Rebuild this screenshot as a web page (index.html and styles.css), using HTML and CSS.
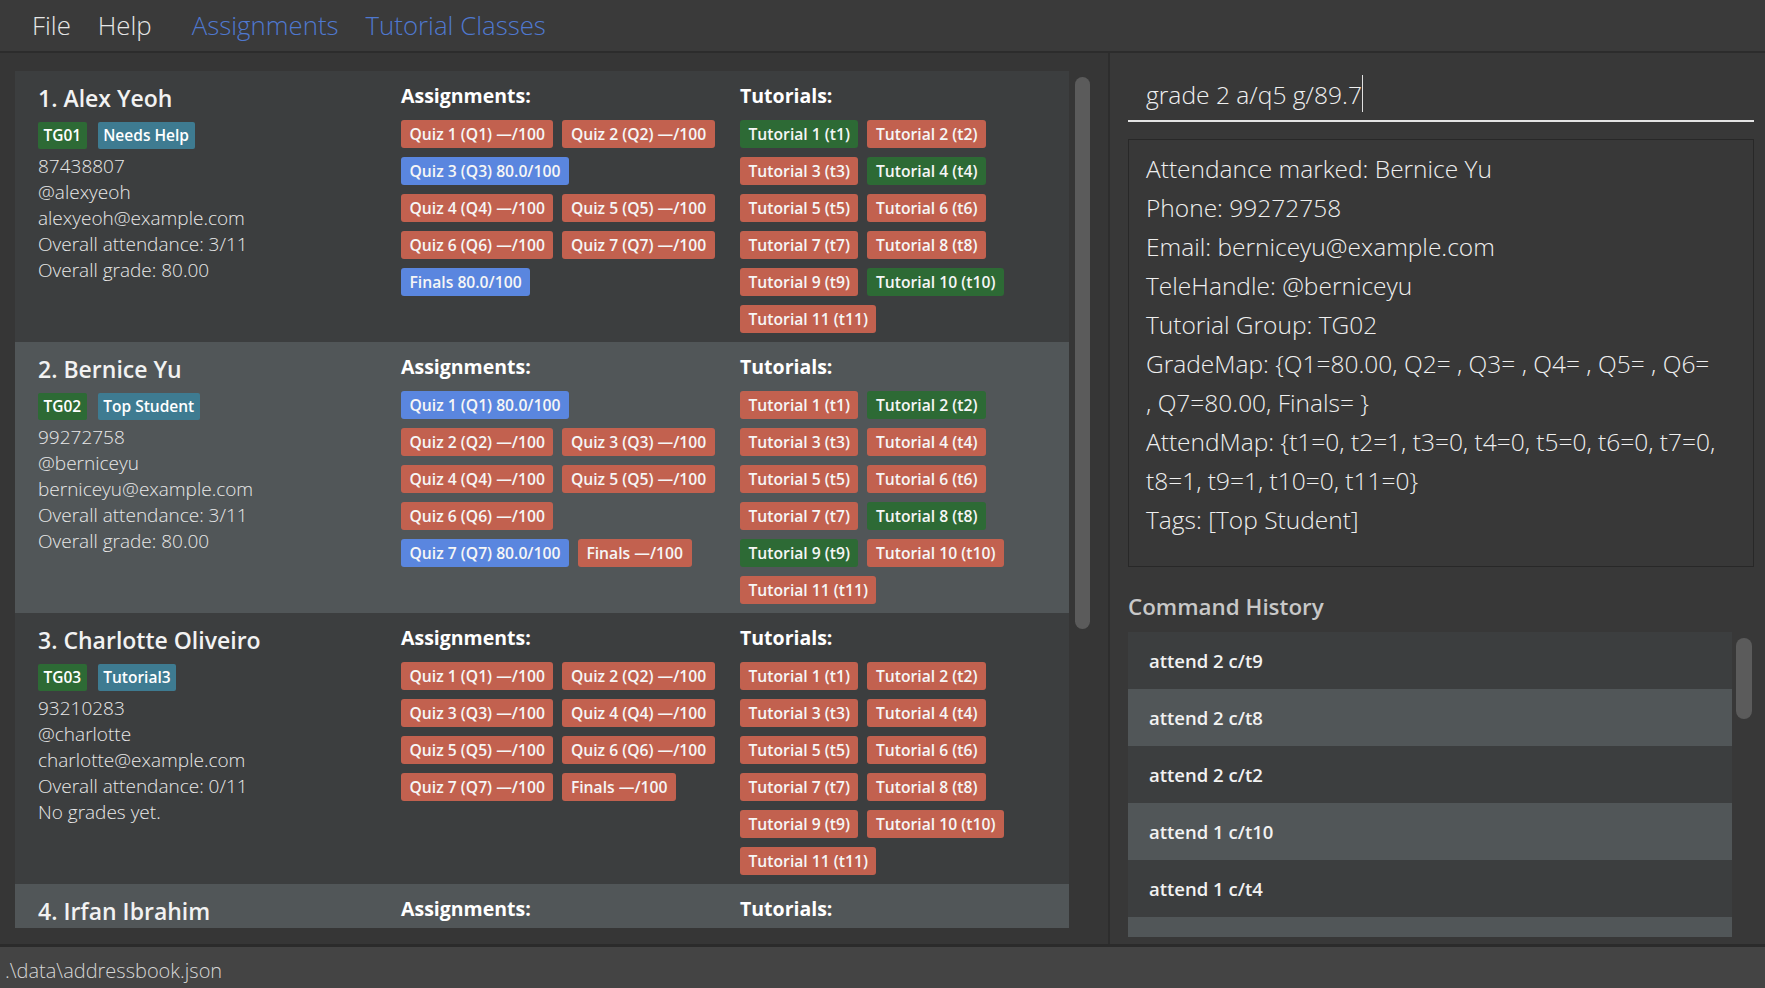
FILE: index.html
```html
<!DOCTYPE html>
<html lang="en">
<head>
<meta charset="utf-8">
<title>Address Book</title>
<link rel="stylesheet" href="styles.css">
</head>
<body>
<div class="app">
  <nav class="menubar">
    <span class="menu-item">File</span>
    <span class="menu-item">Help</span>
    <span class="menu-item menu-link first-link">Assignments</span>
    <span class="menu-item menu-link">Tutorial Classes</span>
  </nav>

  <div class="main">
    <section class="left-pane">
      <div class="person-list">
        <article class="card">
          <div class="info">
            <div class="name">1. Alex Yeoh</div>
            <div class="tags"><span class="tag tag-group">TG01</span><span class="tag">Needs Help</span></div>
            <div class="detail">87438807</div>
            <div class="detail">@alexyeoh</div>
            <div class="detail">alexyeoh@example.com</div>
            <div class="detail">Overall attendance: 3/11</div>
            <div class="detail">Overall grade: 80.00</div>
          </div>
          <div class="col">
            <div class="col-title">Assignments:</div>
            <div class="chips chips-assign">
              <span class="chip red">Quiz 1 (Q1) —/100</span>
              <span class="chip red">Quiz 2 (Q2) —/100</span>
              <span class="chip blue">Quiz 3 (Q3) 80.0/100</span>
              <span class="chip red">Quiz 4 (Q4) —/100</span>
              <span class="chip red">Quiz 5 (Q5) —/100</span>
              <span class="chip red">Quiz 6 (Q6) —/100</span>
              <span class="chip red">Quiz 7 (Q7) —/100</span>
              <span class="chip blue">Finals 80.0/100</span>
            </div>
          </div>
          <div class="col">
            <div class="col-title">Tutorials:</div>
            <div class="chips chips-tut">
              <span class="chip green">Tutorial 1 (t1)</span>
              <span class="chip red">Tutorial 2 (t2)</span>
              <span class="chip red">Tutorial 3 (t3)</span>
              <span class="chip green">Tutorial 4 (t4)</span>
              <span class="chip red">Tutorial 5 (t5)</span>
              <span class="chip red">Tutorial 6 (t6)</span>
              <span class="chip red">Tutorial 7 (t7)</span>
              <span class="chip red">Tutorial 8 (t8)</span>
              <span class="chip red">Tutorial 9 (t9)</span>
              <span class="chip green">Tutorial 10 (t10)</span>
              <span class="chip red">Tutorial 11 (t11)</span>
            </div>
          </div>
        </article>

        <article class="card alt">
          <div class="info">
            <div class="name">2. Bernice Yu</div>
            <div class="tags"><span class="tag tag-group">TG02</span><span class="tag">Top Student</span></div>
            <div class="detail">99272758</div>
            <div class="detail">@berniceyu</div>
            <div class="detail">berniceyu@example.com</div>
            <div class="detail">Overall attendance: 3/11</div>
            <div class="detail">Overall grade: 80.00</div>
          </div>
          <div class="col">
            <div class="col-title">Assignments:</div>
            <div class="chips chips-assign">
              <span class="chip blue">Quiz 1 (Q1) 80.0/100</span>
              <span class="chip red">Quiz 2 (Q2) —/100</span>
              <span class="chip red">Quiz 3 (Q3) —/100</span>
              <span class="chip red">Quiz 4 (Q4) —/100</span>
              <span class="chip red">Quiz 5 (Q5) —/100</span>
              <span class="chip red">Quiz 6 (Q6) —/100</span>
              <span class="chip blue">Quiz 7 (Q7) 80.0/100</span>
              <span class="chip red">Finals —/100</span>
            </div>
          </div>
          <div class="col">
            <div class="col-title">Tutorials:</div>
            <div class="chips chips-tut">
              <span class="chip red">Tutorial 1 (t1)</span>
              <span class="chip green">Tutorial 2 (t2)</span>
              <span class="chip red">Tutorial 3 (t3)</span>
              <span class="chip red">Tutorial 4 (t4)</span>
              <span class="chip red">Tutorial 5 (t5)</span>
              <span class="chip red">Tutorial 6 (t6)</span>
              <span class="chip red">Tutorial 7 (t7)</span>
              <span class="chip green">Tutorial 8 (t8)</span>
              <span class="chip green">Tutorial 9 (t9)</span>
              <span class="chip red">Tutorial 10 (t10)</span>
              <span class="chip red">Tutorial 11 (t11)</span>
            </div>
          </div>
        </article>

        <article class="card">
          <div class="info">
            <div class="name">3. Charlotte Oliveiro</div>
            <div class="tags"><span class="tag tag-group">TG03</span><span class="tag">Tutorial3</span></div>
            <div class="detail">93210283</div>
            <div class="detail">@charlotte</div>
            <div class="detail">charlotte@example.com</div>
            <div class="detail">Overall attendance: 0/11</div>
            <div class="detail">No grades yet.</div>
          </div>
          <div class="col">
            <div class="col-title">Assignments:</div>
            <div class="chips chips-assign">
              <span class="chip red">Quiz 1 (Q1) —/100</span>
              <span class="chip red">Quiz 2 (Q2) —/100</span>
              <span class="chip red">Quiz 3 (Q3) —/100</span>
              <span class="chip red">Quiz 4 (Q4) —/100</span>
              <span class="chip red">Quiz 5 (Q5) —/100</span>
              <span class="chip red">Quiz 6 (Q6) —/100</span>
              <span class="chip red">Quiz 7 (Q7) —/100</span>
              <span class="chip red">Finals —/100</span>
            </div>
          </div>
          <div class="col">
            <div class="col-title">Tutorials:</div>
            <div class="chips chips-tut">
              <span class="chip red">Tutorial 1 (t1)</span>
              <span class="chip red">Tutorial 2 (t2)</span>
              <span class="chip red">Tutorial 3 (t3)</span>
              <span class="chip red">Tutorial 4 (t4)</span>
              <span class="chip red">Tutorial 5 (t5)</span>
              <span class="chip red">Tutorial 6 (t6)</span>
              <span class="chip red">Tutorial 7 (t7)</span>
              <span class="chip red">Tutorial 8 (t8)</span>
              <span class="chip red">Tutorial 9 (t9)</span>
              <span class="chip red">Tutorial 10 (t10)</span>
              <span class="chip red">Tutorial 11 (t11)</span>
            </div>
          </div>
        </article>

        <article class="card alt">
          <div class="info">
            <div class="name">4. Irfan Ibrahim</div>
          </div>
          <div class="col">
            <div class="col-title">Assignments:</div>
          </div>
          <div class="col">
            <div class="col-title">Tutorials:</div>
          </div>
        </article>
      </div>
      <div class="scroll-track list-track"><div class="scroll-thumb list-thumb"></div></div>
    </section>

    <section class="right-pane">
      <div class="command-box"><span class="command-text">grade 2 a/q5 g/89.7</span><span class="caret"></span></div>
      <div class="result-box">
        <div class="result-line">Attendance marked: Bernice Yu</div>
        <div class="result-line">Phone: 99272758</div>
        <div class="result-line">Email: berniceyu@example.com</div>
        <div class="result-line">TeleHandle: @berniceyu</div>
        <div class="result-line">Tutorial Group: TG02</div>
        <div class="result-line">GradeMap: {Q1=80.00, Q2= , Q3= , Q4= , Q5= , Q6=</div>
        <div class="result-line">, Q7=80.00, Finals= }</div>
        <div class="result-line">AttendMap: {t1=0, t2=1, t3=0, t4=0, t5=0, t6=0, t7=0,</div>
        <div class="result-line">t8=1, t9=1, t10=0, t11=0}</div>
        <div class="result-line">Tags: [Top Student]</div>
      </div>
      <h2 class="history-title">Command History</h2>
      <div class="history">
        <ul class="history-list">
          <li class="history-row">attend 2 c/t9</li>
          <li class="history-row alt">attend 2 c/t8</li>
          <li class="history-row">attend 2 c/t2</li>
          <li class="history-row alt">attend 1 c/t10</li>
          <li class="history-row">attend 1 c/t4</li>
          <li class="history-row alt"></li>
        </ul>
        <div class="scroll-track history-track"><div class="scroll-thumb history-thumb"></div></div>
      </div>
    </section>
  </div>

  <footer class="status-bar">.\data\addressbook.json</footer>
</div>
</body>
</html>
```

FILE: styles.css
```css
* { box-sizing: border-box; }

html, body {
  margin: 0;
  padding: 0;
  height: 988px;
  background: #383838;
  font-family: "Open Sans", "Noto Sans", "Liberation Sans", sans-serif;
  color: #ececec;
  overflow: hidden;
}

.app {
  display: flex;
  flex-direction: column;
  height: 988px;
}

/* Menu bar */
.menubar {
  display: flex;
  align-items: center;
  height: 53px;
  padding-left: 32px;
  background: #3a3a3a;
  border-bottom: 2px solid #2c2c2c;
  flex: none;
}
.menu-item {
  font-size: 25.8px;
  font-weight: 300;
  line-height: 51px;
  color: #e6e6e6;
  margin-right: 27px;
}
.menu-link { color: #4f78cf; }
.first-link { margin-left: 13px; }

/* Main area */
.main {
  display: flex;
  height: 891px;
  flex: none;
}

.left-pane {
  width: 1108px;
  flex: none;
  display: flex;
  padding: 18px 0 0 15px;
  background: #363636;
}

.person-list {
  width: 1054px;
  height: 857px;
  overflow: hidden;
  flex: none;
}

.card {
  display: grid;
  grid-template-columns: 363px 339px 1fr;
  height: 271px;
  padding: 12px 0 0 23px;
  background: #3c3e3f;
}
.card.alt { background: #515658; }

.name {
  font-size: 23px;
  font-weight: 600;
  line-height: 30px;
  color: #f2f2f2;
  white-space: nowrap;
}

.tags {
  display: flex;
  gap: 11px;
  margin-top: 9px;
  margin-bottom: 5px;
}
.tag {
  height: 27px;
  line-height: 27px;
  padding: 0 5.5px;
  font-size: 15.5px;
  font-weight: 600;
  color: #ffffff;
  background: #3e7b91;
  border-radius: 2px;
}
.tag-group { background: #2d6a35; }

.detail {
  font-size: 19px;
  font-weight: 300;
  line-height: 25.9px;
  color: #e8e8e8;
  white-space: nowrap;
}

.col-title {
  font-size: 19.5px;
  font-weight: 700;
  line-height: 26px;
  color: #ffffff;
}

.chips {
  display: flex;
  flex-wrap: wrap;
  gap: 9px 9px;
  margin-top: 11px;
}
.chips-assign { width: 322px; }
.chips-tut { width: 329px; }

.chip {
  height: 28px;
  line-height: 28px;
  padding: 0 8.5px;
  font-size: 15.7px;
  font-weight: 600;
  color: #f6f6f6;
  border-radius: 3px;
  white-space: nowrap;
}
.chip.red { background: #c2614f; }
.chip.blue { background: #5a86df; }
.chip.green { background: #2d6a35; }

/* Scrollbars */
.scroll-track { flex: none; }
.scroll-thumb {
  background: #5b5b5b;
  border-radius: 8px;
}
.list-track { margin-left: 5.5px; padding-top: 6px; }
.list-thumb { width: 15px; height: 552px; }
.history-track { margin-left: 4px; padding-top: 6.3px; }
.history-thumb { width: 15.5px; height: 81px; }

/* Right pane */
.right-pane {
  flex: 1;
  border-left: 2px solid #2d2d2d;
  padding: 0 11px 0 18px;
  background: #383838;
}

.command-box {
  margin-top: 12px;
  height: 57px;
  padding: 5px 0 0 18px;
  border-bottom: 2px solid #e4e4e4;
  display: flex;
  align-items: flex-start;
}
.command-text {
  font-size: 24.6px;
  font-weight: 300;
  line-height: 50px;
  color: #f0f0f0;
}
.caret {
  width: 1.5px;
  height: 37px;
  margin-top: 5px;
  background: #e0e0e0;
}

.result-box {
  margin-top: 16.5px;
  height: 428px;
  border: 1px solid #282828;
  padding: 9px 17px;
}
.result-line {
  font-size: 24.5px;
  font-weight: 300;
  line-height: 39px;
  color: #efefef;
  white-space: nowrap;
}

.history-title {
  margin: 25.5px 0 0 0;
  font-size: 22.4px;
  font-weight: 600;
  line-height: 30px;
  color: #c8c8c8;
}

.history {
  display: flex;
  margin-top: 9.7px;
  height: 305.3px;
}
.history-list {
  list-style: none;
  margin: 0;
  padding: 0;
  width: 604px;
  flex: none;
  overflow: hidden;
}
.history-row {
  height: 57px;
  line-height: 57px;
  padding-left: 21px;
  font-size: 18.5px;
  font-weight: 600;
  color: #f2f2f2;
  background: #3c3e3f;
}
.history-row.alt { background: #515658; }

/* Status bar */
.status-bar {
  height: 44px;
  flex: none;
  border-top: 3px solid #2b2b2b;
  background: #444444;
  padding: 6px 0 0 5px;
  font-size: 20px;
  font-weight: 300;
  line-height: 35px;
  color: #d6d6d6;
}
```
